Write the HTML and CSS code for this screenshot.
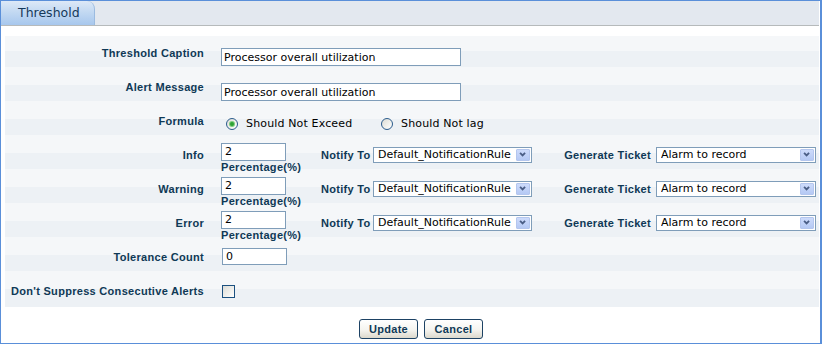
FILE: index.html
```html
<!DOCTYPE html>
<html>
<head>
<meta charset="utf-8">
<title>Threshold</title>
<link rel="stylesheet" href="styles.css">
</head>
<body>
<div class="panel">
  <div class="tabbar"><div class="tab">Threshold</div></div>
  <div class="form">
    <div class="row first">
      <div class="label">Threshold Caption</div>
      <div class="field f-caption"><input class="text wide" type="text" value="Processor overall utilization"></div>
    </div>
    <div class="row">
      <div class="label">Alert Message</div>
      <div class="field f-alert"><input class="text wide" type="text" value="Processor overall utilization"></div>
    </div>
    <div class="row">
      <div class="label">Formula</div>
      <div class="field f-formula">
        <label class="opt opt-first"><span class="radio on"></span><span>Should Not Exceed</span></label>
        <label class="opt"><span class="radio"></span><span>Should Not lag</span></label>
      </div>
    </div>
    <div class="row">
      <div class="label">Info</div>
      <div class="field f-level">
        <div class="pct"><input class="text small" type="text" value="2"><div class="pct-label">Percentage(%)</div></div>
        <div class="sub-label notify">Notify To</div>
        <span class="sel sel-notify"><select><option>Default_NotificationRule</option></select><svg class="arrow" width="14" height="12" viewBox="0 0 14 12"><path d="M3.5 3.5 L6.5 6.5 L9.5 3.5" fill="none" stroke="#4a5e86" stroke-width="2.2"/></svg></span>
        <div class="sub-label ticket">Generate Ticket</div>
        <span class="sel sel-ticket"><select><option>Alarm to record</option></select><svg class="arrow" width="14" height="12" viewBox="0 0 14 12"><path d="M3.5 3.5 L6.5 6.5 L9.5 3.5" fill="none" stroke="#4a5e86" stroke-width="2.2"/></svg></span>
      </div>
    </div>
    <div class="row">
      <div class="label">Warning</div>
      <div class="field f-level">
        <div class="pct"><input class="text small" type="text" value="2"><div class="pct-label">Percentage(%)</div></div>
        <div class="sub-label notify">Notify To</div>
        <span class="sel sel-notify"><select><option>Default_NotificationRule</option></select><svg class="arrow" width="14" height="12" viewBox="0 0 14 12"><path d="M3.5 3.5 L6.5 6.5 L9.5 3.5" fill="none" stroke="#4a5e86" stroke-width="2.2"/></svg></span>
        <div class="sub-label ticket">Generate Ticket</div>
        <span class="sel sel-ticket"><select><option>Alarm to record</option></select><svg class="arrow" width="14" height="12" viewBox="0 0 14 12"><path d="M3.5 3.5 L6.5 6.5 L9.5 3.5" fill="none" stroke="#4a5e86" stroke-width="2.2"/></svg></span>
      </div>
    </div>
    <div class="row">
      <div class="label">Error</div>
      <div class="field f-level">
        <div class="pct"><input class="text small" type="text" value="2"><div class="pct-label">Percentage(%)</div></div>
        <div class="sub-label notify">Notify To</div>
        <span class="sel sel-notify"><select><option>Default_NotificationRule</option></select><svg class="arrow" width="14" height="12" viewBox="0 0 14 12"><path d="M3.5 3.5 L6.5 6.5 L9.5 3.5" fill="none" stroke="#4a5e86" stroke-width="2.2"/></svg></span>
        <div class="sub-label ticket">Generate Ticket</div>
        <span class="sel sel-ticket"><select><option>Alarm to record</option></select><svg class="arrow" width="14" height="12" viewBox="0 0 14 12"><path d="M3.5 3.5 L6.5 6.5 L9.5 3.5" fill="none" stroke="#4a5e86" stroke-width="2.2"/></svg></span>
      </div>
    </div>
    <div class="row">
      <div class="label">Tolerance Count</div>
      <div class="field f-tol"><input class="text small tol" type="text" value="0"></div>
    </div>
    <div class="row last">
      <div class="label">Don't Suppress Consecutive Alerts</div>
      <div class="field f-check"><span class="checkbox"></span></div>
    </div>
  </div>
  <div class="actions">
    <button class="btn" type="button">Update</button>
    <button class="btn" type="button">Cancel</button>
  </div>
</div>
</body>
</html>
```

FILE: styles.css
```css
html, body {
  margin: 0;
  padding: 0;
  background: #ffffff;
}

.panel {
  box-sizing: border-box;
  width: 822px;
  height: 344px;
  border: 1px solid #5a8fd9;
  border-right-width: 2px;
  padding: 0 1px 0 0;
  background: #ffffff;
}

.tabbar {
  height: 24px;
  background: #e3e8ef;
  border-bottom: 1px solid #b6babb;
  display: flex;
  align-items: flex-end;
}

.tab {
  box-sizing: border-box;
  width: 94px;
  height: 24px;
  padding-left: 17px;
  border-top-right-radius: 8px;
  border-right: 1px solid #9bbbe0;
  background: linear-gradient(to bottom, #dde9f7 0%, #c3d9f2 45%, #a7c7ed 100%);
  font-family: "DejaVu Sans", Verdana, sans-serif;
  font-size: 12.5px;
  line-height: 24px;
  color: #15395a;
}

.form {
  margin: 10px 0 0 4px;
}

.row {
  display: grid;
  grid-template-columns: 199px 1fr;
  column-gap: 17px;
  height: 34px;
  background: linear-gradient(to top, #edf1f5 16px, #f5f7f9 16px);
}

.row.first {
  height: 31px;
}

.row.last {
  height: 36px;
  background: linear-gradient(to top, #edf1f5 18px, #f5f7f9 18px);
}

.label {
  text-align: right;
  padding-top: 13px;
  font-family: "Liberation Sans", Arial, sans-serif;
  font-weight: bold;
  font-size: 11px;
  letter-spacing: 0.3px;
  line-height: 14px;
  color: #0f3956;
  white-space: nowrap;
}

.row.first .label {
  padding-top: 10px;
}

.field {
  display: flex;
  align-items: flex-start;
}

.text {
  box-sizing: border-box;
  height: 18px;
  margin: 0;
  border: 1px solid #7f9db9;
  padding: 0 2px;
  background: #ffffff;
  font-family: "DejaVu Sans", Verdana, sans-serif;
  font-size: 11px;
  color: #000000;
  outline: none;
}

.wide {
  width: 240px;
}

.small {
  width: 65px;
  padding-left: 3px;
}

.f-caption {
  padding-top: 12px;
}

.f-alert {
  padding-top: 16px;
}

.f-formula {
  padding-top: 17px;
  font-family: "DejaVu Sans", Verdana, sans-serif;
  font-size: 11px;
  letter-spacing: 0.15px;
  color: #000000;
}

.opt {
  display: flex;
  align-items: center;
  height: 12px;
  gap: 8px;
  line-height: 12px;
}

.opt-first {
  width: 155px;
  margin-left: 5px;
}

.radio {
  box-sizing: border-box;
  width: 12px;
  height: 12px;
  border-radius: 50%;
  border: 1px solid #2a5b8c;
  background: linear-gradient(135deg, #dcdcd5 0%, #f2f2ee 60%, #ffffff 100%);
  display: flex;
  align-items: center;
  justify-content: center;
}

.radio.on::after {
  content: "";
  width: 4px;
  height: 4px;
  border-radius: 50%;
  background: #2fa234;
  box-shadow: 0 0 0 1px #7ccc7c;
}

.f-level {
  padding-top: 6px;
}

.pct {
  width: 100px;
}

.pct-label {
  font-family: "Liberation Sans", Arial, sans-serif;
  font-weight: bold;
  font-size: 11px;
  letter-spacing: 0.3px;
  line-height: 12px;
  color: #0f3956;
  white-space: nowrap;
}

.sub-label {
  font-family: "Liberation Sans", Arial, sans-serif;
  font-weight: bold;
  font-size: 11px;
  letter-spacing: 0.3px;
  line-height: 14px;
  color: #0f3956;
  white-space: nowrap;
  margin-top: 7px;
}

.notify {
  width: 52px;
}

.ticket {
  box-sizing: border-box;
  width: 124px;
  text-align: right;
  padding-right: 5px;
}

.sel {
  position: relative;
  display: block;
  margin-top: 6px;
  height: 16px;
}

.sel select {
  -webkit-appearance: none;
  appearance: none;
  box-sizing: border-box;
  display: block;
  height: 16px;
  margin: 0;
  border: 1px solid #7f9db9;
  border-radius: 0;
  padding: 0 18px 0 4px;
  background: #ffffff;
  font-family: "DejaVu Sans", Verdana, sans-serif;
  font-size: 11px;
  line-height: 14px;
  color: #000000;
  outline: none;
}

.sel-notify select {
  width: 159px;
}

.sel-ticket select {
  width: 160px;
}

.arrow {
  position: absolute;
  right: 2px;
  top: 2px;
  width: 14px;
  height: 12px;
  box-sizing: border-box;
  border: 1px solid #b4c6ee;
  border-radius: 1px;
  background: linear-gradient(to bottom, #cddbfb 0%, #b5c9f4 100%);
  pointer-events: none;
}

.f-tol {
  padding-top: 11px;
}

.tol {
  height: 17px;
  width: 65px;
  margin-left: 1px;
}

.f-check {
  padding-top: 14px;
}

.checkbox {
  box-sizing: border-box;
  display: block;
  width: 13px;
  height: 13px;
  margin-left: 1px;
  border: 1px solid #1c5180;
  background: linear-gradient(135deg, #dcdcd7 0%, #eeeeea 50%, #ffffff 100%);
}

.actions {
  display: flex;
  gap: 6px;
  padding: 12px 0 0 358px;
}

.btn {
  box-sizing: border-box;
  width: 59px;
  height: 20px;
  margin: 0;
  padding: 0;
  border: 1px solid #1d4264;
  border-radius: 3px;
  background: linear-gradient(to bottom, #ffffff 0%, #f5f4ef 55%, #dcd8cc 100%);
  font-family: "Liberation Sans", Arial, sans-serif;
  font-weight: bold;
  font-size: 11px;
  letter-spacing: 0.3px;
  color: #0f3956;
}
```
